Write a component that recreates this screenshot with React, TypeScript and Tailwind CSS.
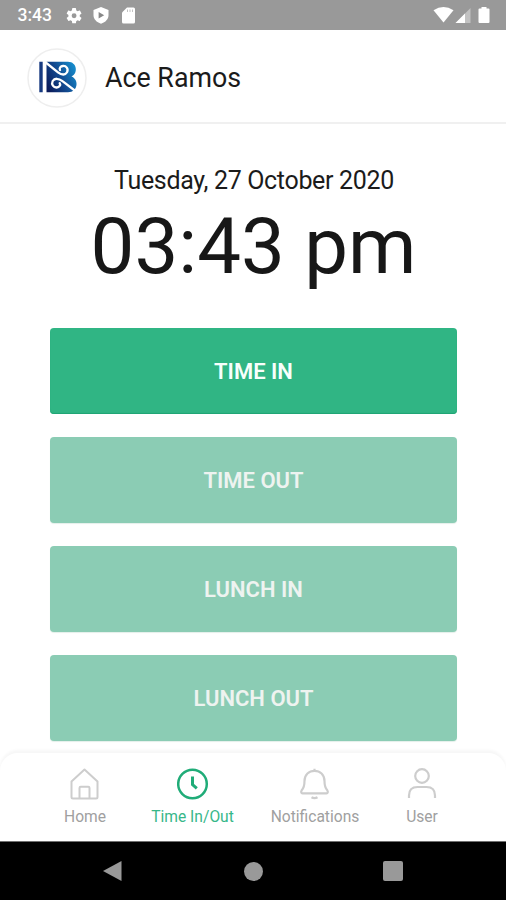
import React from 'react';

// ----------------------------------------------------------------------

const StatusBar: React.FC = () => {
  return (
    <div className="flex h-[30px] items-center bg-[#999999] text-white">
      <span className="w-[48px] pl-[17.500px] pt-[2px] text-[17.500px] font-medium leading-none">3:43</span>

      <svg width="90" height="30" viewBox="48 0 90 30" fill="#fff">
        <g transform="translate(64.6 6.2) scale(0.79)">
          <path d="M19.14 12.94c.04-.3.06-.61.06-.94s-.02-.64-.07-.94l2.03-1.58a.49.49 0 0 0 .12-.61l-1.92-3.32a.49.49 0 0 0-.59-.22l-2.39.96a7 7 0 0 0-1.62-.94l-.36-2.54A.48.48 0 0 0 13.92 2.4h-3.84a.48.48 0 0 0-.48.41l-.36 2.54c-.59.24-1.13.57-1.62.94l-2.39-.96a.48.48 0 0 0-.59.22L2.73 8.87a.48.48 0 0 0 .12.61l2.03 1.58a6 6 0 0 0 0 1.88l-2.03 1.58a.49.49 0 0 0-.12.61l1.92 3.32c.12.22.37.29.59.22l2.39-.96c.5.38 1.03.7 1.62.94l.36 2.54c.05.24.24.41.48.41h3.84c.24 0 .44-.17.47-.41l.36-2.54a7 7 0 0 0 1.62-.94l2.39.96c.22.08.47 0 .59-.22l1.92-3.32a.48.48 0 0 0-.12-.61zM12 15.1A3.1 3.1 0 1 1 12 8.9a3.1 3.1 0 0 1 0 6.2z" />
        </g>
        <path d="M101 7l7.500 3v5c0 4.200-3 7.200-7.500 8.700-4.500-1.500-7.500-4.500-7.500-8.700v-5z" />
        <path d="M98.600 11.900l5.600 3.300-5.600 3.300z" fill="#888" />
        <path d="M127 7.500h6.500q1.500 0 1.500 1.500V22q0 1.500-1.500 1.500h-10q-1.500 0-1.500-1.500V12.500z" />
        <path d="M127.500 9.500v2.500M130 9.500v2.500M132.500 9.500v2.500" stroke="#999" strokeOpacity="0.6" strokeWidth="1" />
      </svg>

      <svg width="72" height="30" viewBox="430 0 72 30" className="ml-auto mr-1" fill="#fff">
        <path d="M433.500 10.200Q443.500 3.800 453.500 10.200L443.500 22.500z" />
        <path d="M470.500 8v15h-15z" opacity="0.4" />
        <path d="M465 13.500V23h-9.500z" />
        <path d="M481.500 7h5v1.500h2q1 0 1 1V22q0 1-1 1h-9q-1 0-1-1V9.500q0-1 1-1h2z" />
      </svg>
    </div>
  );
};

const Logo: React.FC = () => {
  return (
    <svg width="60" height="60" viewBox="0 0 60 60" fill="none">
      <defs>
        <linearGradient id="logo" x1="20" y1="38" x2="49" y2="24" gradientUnits="userSpaceOnUse">
          <stop offset="0" stopColor="#0b1c5c" />
          <stop offset="0.5" stopColor="#124a90" />
          <stop offset="1" stopColor="#1688c8" />
        </linearGradient>
      </defs>
      <circle cx="30" cy="30" r="29" stroke="#eeeeee" strokeWidth="1.500" fill="#fff" />
      <path d="M12.300 13.800h3.400v30.400h-3.400z" fill="#173a80" />
      <path d="M19.500 13.800H41c9 0 10.500 11.700 3.500 14.700 7.500 2.500 7 15.700-3.500 15.700H19.500z" fill="url(#logo)" />
      <g stroke="#fff" strokeWidth="2.300" strokeLinecap="round">
        <path d="M17.500 13.500L31 24.300C35 27.500 38.500 27 40 24.300 41.800 20.500 39 17.700 36 18c-2.500.2-4 2.300-3 4" />
        <path d="M51 45L35.500 33.200C31.500 30 27.500 30 25.700 33c-1.800 3.500 1 6.700 4 6.500 2.700-.2 4.200-2.500 3-4.300" />
      </g>
    </svg>
  );
};

const Header: React.FC = () => {
  return (
    <header className="flex h-[94px] items-center gap-[18px] border-b-2 border-[#f0f0f0] pl-[27px] pt-[4px]">
      <Logo />
      <h1 className="text-[26.800px] leading-8 text-[#1b1b1b]">Ace Ramos</h1>
    </header>
  );
};

// ----------------------------------------------------------------------

const actions = [
  { label: 'TIME IN', enabled: true },
  { label: 'TIME OUT', enabled: false },
  { label: 'LUNCH IN', enabled: false },
  { label: 'LUNCH OUT', enabled: false },
];

const Actions: React.FC = () => {
  return (
    <div className="flex flex-col gap-[23px] pl-[50px] pr-[49px]">
      {actions.map(({ label, enabled }) => (
        <button
          key={label}
          disabled={!enabled}
          className={
            enabled
              ? 'h-[86px] rounded bg-[#30b584] text-[22px] font-semibold text-[#f8fffc] shadow-[inset_0_-1px_1px_#20a474]'
              : 'h-[86px] rounded bg-[#8bccb4] text-[22px] font-semibold text-[#eef3f0] shadow-[0_1px_1px_#e4efea]'
          }
        >
          {label}
        </button>
      ))}
    </div>
  );
};

// ----------------------------------------------------------------------

const HomeIcon = () => (
  <svg width="32" height="34" viewBox="0 0 32 34" fill="none" stroke="#cdcdcd" strokeWidth="2" strokeLinejoin="round">
    <path d="M15.500 3.500L28.500 15.500V31q0 1.500-1.500 1.500H4Q2.500 32.500 2.500 31V15.500z" />
    <path d="M10.500 32V22q0-1.200 1.200-1.200h7.600q1.200 0 1.200 1.200V32" />
  </svg>
);

const ClockIcon = () => (
  <svg width="32" height="34" viewBox="0 0 32 34" fill="none" stroke="#20ac78" strokeWidth="2.500">
    <circle cx="15.500" cy="18" r="14.300" />
    <path d="M15.500 10.500v8l4.300 3.800" strokeWidth="3" />
  </svg>
);

const BellIcon = () => (
  <svg width="32" height="34" viewBox="0 0 32 34" fill="none" stroke="#cdcdcd" strokeWidth="2.200" strokeLinejoin="round">
    <path d="M15.500 2.800v2M5.500 15C5.500 8.500 10 4.800 15.500 4.800S25.500 8.500 25.500 15c0 5 .6 7 2.800 9.300.9 1.200.6 3-.8 3H3.500c-1.400 0-1.700-1.800-.8-3C4.900 22 5.500 20 5.500 15z" />
    <path d="M12.500 31.300q3 1.800 6 0" />
  </svg>
);

const UserIcon = () => (
  <svg width="32" height="34" viewBox="0 0 32 34" fill="none" stroke="#cdcdcd" strokeWidth="2.200">
    <circle cx="16" cy="10" r="6.800" />
    <path d="M3 32v-2.500q0-8.500 8.500-8.500h9q8.500 0 8.500 8.500V32" />
  </svg>
);

const BottomNav: React.FC = () => {
  return (
    <nav className="flex h-[88px] rounded-t-[18px] bg-white pl-[31px] pt-[13px] text-[15.600px] leading-[18px] text-[#a0a0a0] shadow-[0_-3px_3px_#f7f7f7]">
      <div className="flex w-[108px] flex-col items-center gap-[8px]">
        <HomeIcon />
        <span>Home</span>
      </div>
      <div className="flex w-[107px] flex-col items-center gap-[8px] text-[#37b789]">
        <ClockIcon />
        <span>Time In/Out</span>
      </div>
      <div className="flex w-[138px] flex-col items-center gap-[8px]">
        <BellIcon />
        <span>Notifications</span>
      </div>
      <div className="flex w-[76px] flex-col items-center gap-[8px]">
        <UserIcon />
        <span>User</span>
      </div>
    </nav>
  );
};

const SystemBar: React.FC = () => {
  return (
    <div className="flex h-[59px] items-center justify-between border-t border-[#707070] bg-black pl-[102px] pr-[103px]">
      <svg width="21" height="22" viewBox="0 0 21 22" fill="#999999">
        <path d="M1 11L19.500 1v20z" />
      </svg>
      <div className="size-[19px] rounded-full bg-[#999999]" />
      <div className="size-[20px] rounded-[2px] bg-[#999999]" />
    </div>
  );
};

const App: React.FC = () => {
  return (
    <div className="flex h-[900px] w-[506px] flex-col overflow-hidden bg-white font-['Roboto',sans-serif]">
      <StatusBar />
      <Header />
      <main className="flex flex-1 flex-col">
        <p className="mt-[41px] pl-[2px] text-center text-[25px] leading-[32px] tracking-[-0.33px] text-[#1b1b1b]">Tuesday, 27 October 2020</p>
        <p className="mb-[36px] mt-[5px] pl-[1px] text-center text-[78px] leading-[90px] text-[#171717]">03:43 pm</p>
        <Actions />
      </main>
      <BottomNav />
      <SystemBar />
    </div>
  );
};

export default App;
